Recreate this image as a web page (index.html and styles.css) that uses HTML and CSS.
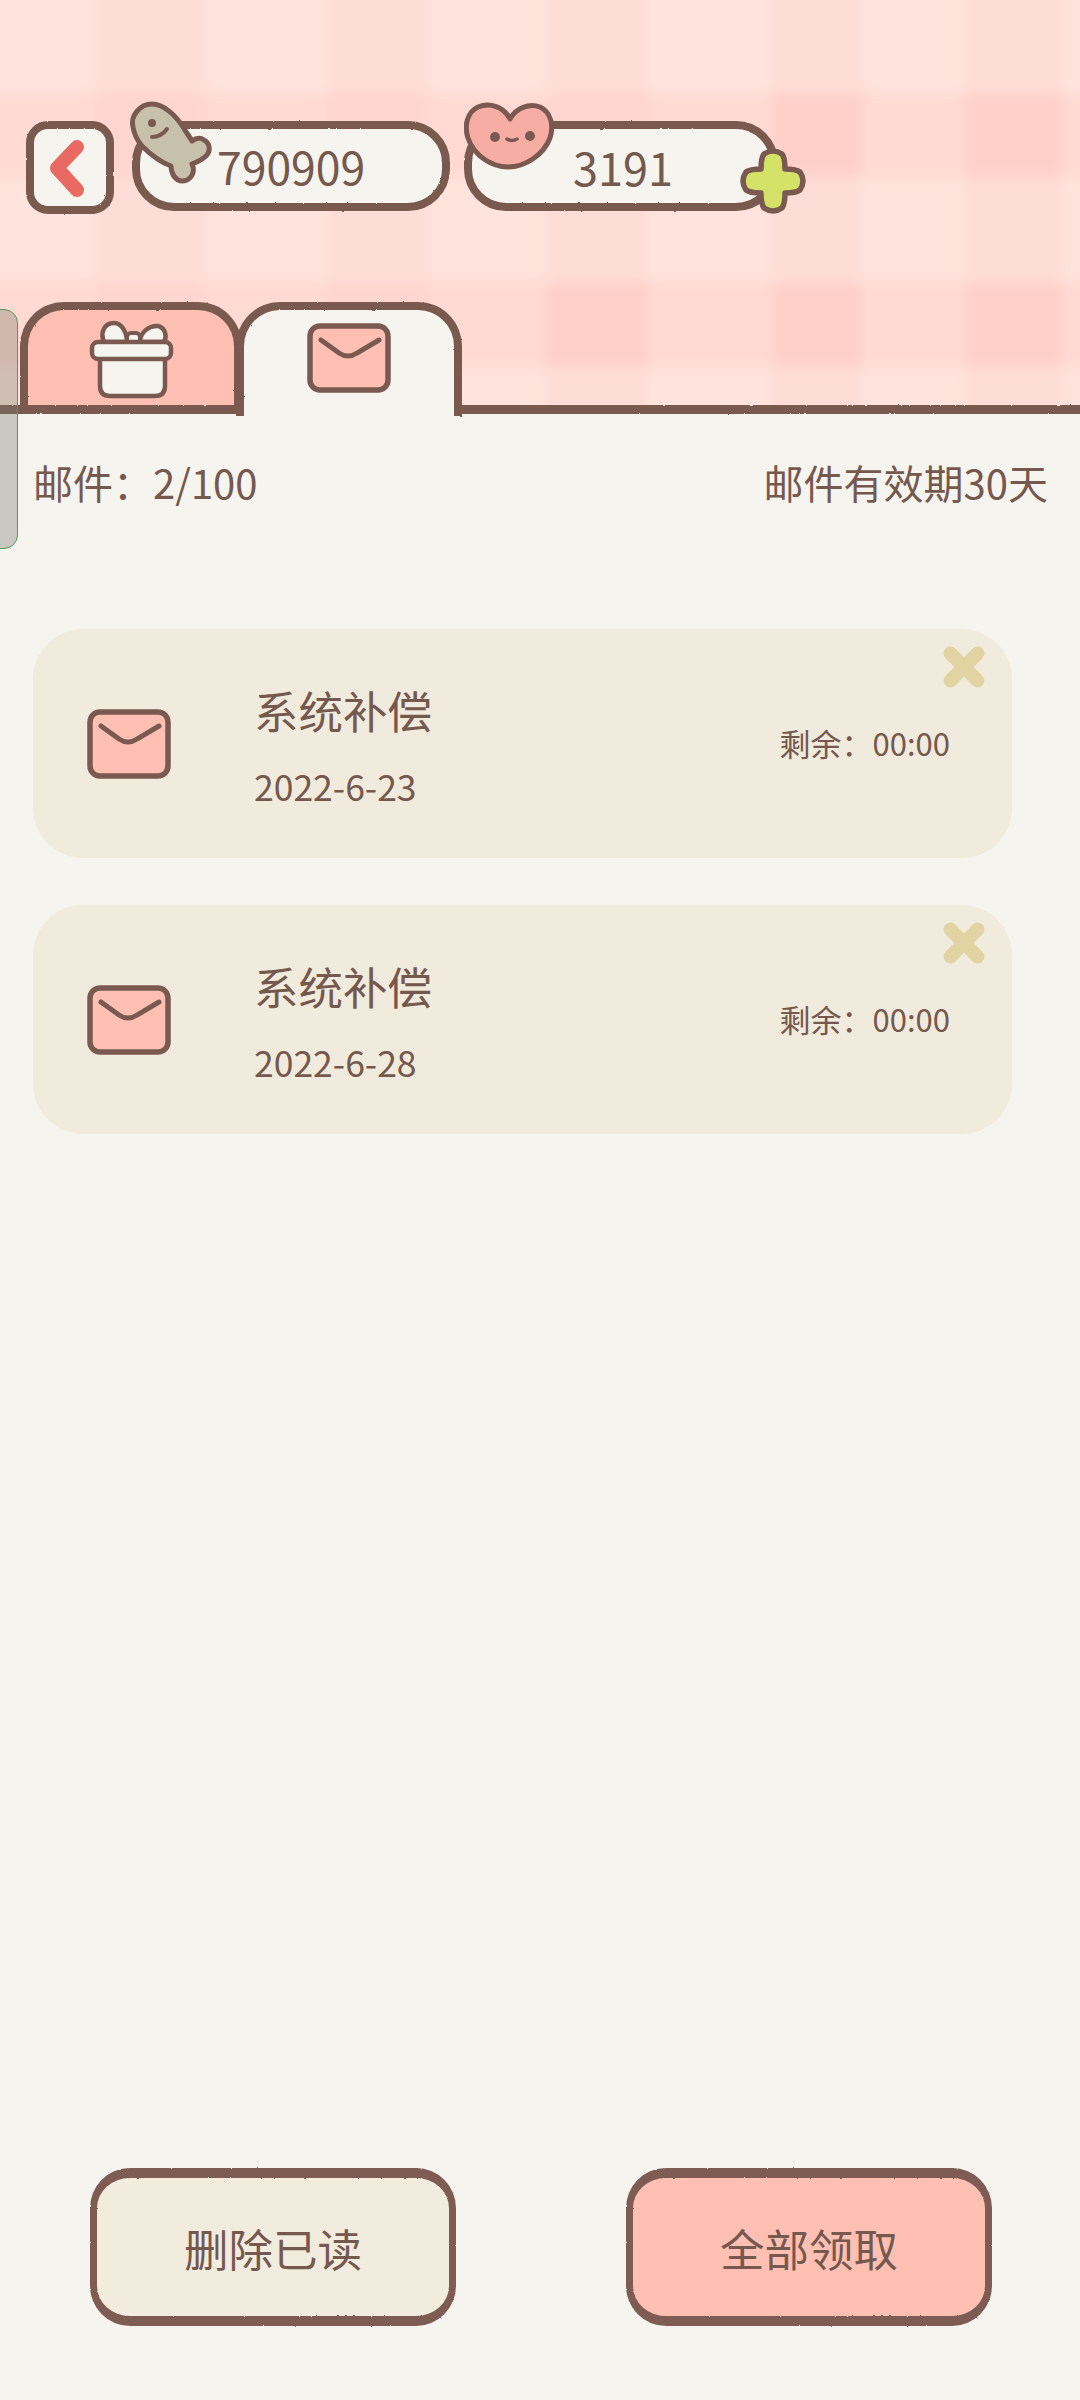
FILE: index.html
```html
<!DOCTYPE html>
<html lang="zh">
<head>
  <meta charset="UTF-8">
  <title>邮件</title>
  <link rel="stylesheet" href="styles.css">
</head>
<body>

  <svg class="defs" width="0" height="0">
    <filter id="rough" x="-5%" y="-5%" width="110%" height="110%">
      <feTurbulence type="fractalNoise" baseFrequency="0.3" numOctaves="2" seed="4"/>
      <feDisplacementMap in="SourceGraphic" scale="2"/>
    </filter>
    <filter id="rough-line" x="0" y="-100%" width="100%" height="300%">
      <feTurbulence type="fractalNoise" baseFrequency="0.3" numOctaves="2" seed="7"/>
      <feDisplacementMap in="SourceGraphic" scale="2"/>
    </filter>
    <filter id="soft" x="0" y="0" width="100%" height="100%">
      <feGaussianBlur stdDeviation="6"/>
    </filter>
  </svg>

  <div class="app">
    <div class="side-tab"></div>

    <header class="top">
      <svg class="plaid" viewBox="0 0 1080 405" preserveAspectRatio="none">
        <g filter="url(#soft)">
          <rect x="-20" y="-20" width="1120" height="445" fill="#ffe3dc"/>
          <g fill="#ffc9c2" fill-opacity="0.2">
            <rect x="96" y="-20" width="110" height="445"/>
            <rect x="328" y="-20" width="100" height="445"/>
            <rect x="545" y="-20" width="103" height="445"/>
            <rect x="772" y="-20" width="90" height="445"/>
            <rect x="965" y="-20" width="97" height="445"/>
          </g>
          <g fill="#ffc9c2" fill-opacity="0.34">
            <rect x="-20" y="93" width="1120" height="84"/>
            <rect x="-20" y="282" width="1120" height="85"/>
          </g>
          <g fill="#ffc9c2" fill-opacity="0.4">
            <rect x="772" y="93" width="90" height="84"/>
            <rect x="965" y="93" width="97" height="84"/>
            <rect x="545" y="282" width="103" height="85"/>
            <rect x="772" y="282" width="90" height="85"/>
            <rect x="965" y="282" width="97" height="85"/>
          </g>
        </g>
      </svg>

      <div class="wallet">
        <button class="back">
          <svg viewBox="0 0 88 93" class="back-icon">
            <path d="M51 26 L31 47 L51 69" fill="none" stroke="#e86a62" stroke-width="14" stroke-linecap="round" stroke-linejoin="round"/>
          </svg>
        </button>

        <div class="pill pill-fish">
          <svg class="fish" viewBox="0 0 100 100">
            <path d="M13 33 C10 22 20 10 32 10 C44 10 56 22 63 33 C66 38 69 42 72 47 C76 44 80 43 84 46 C90 49 91 57 86 62 C82 66 77 68 72 70 C75 76 73 83 67 86 C60 89 54 85 52 78 C51 75 51 73 51 72 C40 68 30 60 22 52 C17 46 14 40 13 33 Z" fill="#c7c1ac" stroke="#7a5a50" stroke-width="5" stroke-linejoin="round"/>
            <circle cx="32" cy="29" r="4" fill="#7a5a50"/>
            <path d="M32 43 Q41 43 47 35" fill="none" stroke="#7a5a50" stroke-width="4" stroke-linecap="round"/>
          </svg>
          <span class="amount amount-fish">790909</span>
        </div>

        <div class="pill pill-heart">
          <svg class="heart" viewBox="0 0 90 68">
            <path d="M46 17 C40 5 26 0 14 5 C3 10 0 24 4 36 C10 54 28 65 44 65 C62 65 80 52 86 36 C90 24 87 10 76 5 C65 1 52 6 46 17 Z" fill="#f7ada3" stroke="#7a5a50" stroke-width="5" stroke-linejoin="round"/>
            <circle cx="31" cy="35" r="5" fill="#7a5a50"/>
            <circle cx="66" cy="34" r="5" fill="#7a5a50"/>
            <path d="M43 37 Q48 40 53 37" fill="none" stroke="#7a5a50" stroke-width="3.5" stroke-linecap="round"/>
          </svg>
          <span class="amount">3191</span>
          <svg class="plus" viewBox="0 0 66 66">
            <path d="M24 6 Q33 0 42 6 Q45 10 45 21 Q56 21 60 24 Q66 33 60 42 Q56 45 45 45 Q45 56 42 60 Q33 66 24 60 Q21 56 21 45 Q10 45 6 42 Q0 33 6 24 Q10 21 21 21 Q21 10 24 6 Z" fill="#d5e268" stroke="#7a5a50" stroke-width="5.5" stroke-linejoin="round"/>
          </svg>
        </div>
      </div>

      <nav class="tabs">
        <div class="tab tab-off">
          <svg class="tab-icon" viewBox="-4 0 110 90">
            <path d="M24 27 C20 18 24 8 34 8 C42 8 47 18 47 27 Z" fill="#f6f4ee" stroke="#7a5a50" stroke-width="4.5" stroke-linejoin="round"/>
            <path d="M60 27 C60 17 70 10 78 11 C86 13 87 22 84 27 Z" fill="#f6f4ee" stroke="#7a5a50" stroke-width="4.5" stroke-linejoin="round"/>
            <rect x="47" y="18" width="13" height="11" rx="4" fill="#f6f4ee" stroke="#7a5a50" stroke-width="4"/>
            <path d="M20 42 V71 Q20 81 30 81 H75 Q85 81 85 71 V42 Z" fill="#f6f4ee" stroke="#7a5a50" stroke-width="4.5" stroke-linejoin="round"/>
            <rect x="12" y="27" width="79" height="17" rx="6" fill="#f6f4ee" stroke="#7a5a50" stroke-width="4.5"/>
          </svg>
        </div>
        <div class="tab tab-on">
          <svg class="envelope" viewBox="0 0 84 70">
            <rect x="3" y="3" width="78" height="64" rx="10" fill="#ffc0b3" stroke="#7a5a50" stroke-width="5.5"/>
            <path d="M14 17 L32 30 Q41 36 50 30 L72 17" fill="none" stroke="#7a5a50" stroke-width="5" stroke-linecap="round"/>
          </svg>
        </div>
      </nav>
    </header>

    <main class="content">
      <div class="mail-info">
        <span>邮件：2/100</span>
        <span>邮件有效期30天</span>
      </div>

      <div class="mail-list">
        <div class="mail-card">
          <svg class="envelope" viewBox="0 0 84 70">
            <rect x="3" y="3" width="78" height="64" rx="10" fill="#ffc0b3" stroke="#7a5a50" stroke-width="5.5"/>
            <path d="M14 17 L32 30 Q41 36 50 30 L72 17" fill="none" stroke="#7a5a50" stroke-width="5" stroke-linecap="round"/>
          </svg>
          <div class="mail-text">
            <div class="mail-title">系统补偿</div>
            <div class="mail-date">2022-6-23</div>
          </div>
          <div class="mail-left">剩余：00:00</div>
          <svg class="close" viewBox="0 0 42 42">
            <path d="M8 8 L34 34 M34 8 L8 34" stroke="#e2d3a3" stroke-width="13" stroke-linecap="round"/>
          </svg>
        </div>

        <div class="mail-card">
          <svg class="envelope" viewBox="0 0 84 70">
            <rect x="3" y="3" width="78" height="64" rx="10" fill="#ffc0b3" stroke="#7a5a50" stroke-width="5.5"/>
            <path d="M14 17 L32 30 Q41 36 50 30 L72 17" fill="none" stroke="#7a5a50" stroke-width="5" stroke-linecap="round"/>
          </svg>
          <div class="mail-text">
            <div class="mail-title">系统补偿</div>
            <div class="mail-date">2022-6-28</div>
          </div>
          <div class="mail-left">剩余：00:00</div>
          <svg class="close" viewBox="0 0 42 42">
            <path d="M8 8 L34 34 M34 8 L8 34" stroke="#e2d3a3" stroke-width="13" stroke-linecap="round"/>
          </svg>
        </div>
      </div>

      <div class="actions">
        <button class="action action-delete"><span>删除已读</span></button>
        <button class="action action-claim"><span>全部领取</span></button>
      </div>
    </main>
  </div>

</body>
</html>
```

FILE: styles.css
```css
* {
  box-sizing: border-box;
}

body {
  margin: 0;
  background: #f6f4ee;
  font-family: "Noto Sans CJK SC", "Noto Sans", sans-serif;
  color: #75584e;
}

.defs {
  position: absolute;
}

.app {
  position: relative;
  width: 1080px;
  height: 2400px;
  display: flex;
  flex-direction: column;
  overflow: hidden;
}

.side-tab {
  position: absolute;
  left: -20px;
  top: 309px;
  width: 38px;
  height: 240px;
  border: 1px solid #4f9a5c;
  border-radius: 14px;
  background: rgba(120, 120, 110, 0.35);
  z-index: 5;
}

/* header */
.top {
  position: relative;
  height: 414px;
  padding: 121px 0 0 26px;
  display: flex;
  flex-direction: column;
}

.top::after {
  content: "";
  position: absolute;
  left: 0;
  right: 0;
  bottom: 0;
  height: 9px;
  background: #7a5a50;
  filter: url(#rough-line);
}

.plaid {
  position: absolute;
  left: 0;
  top: 0;
  width: 1080px;
  height: 405px;
}

.wallet {
  position: relative;
  display: flex;
  align-items: flex-start;
  gap: 18px;
}

/* hand drawn outlines sit on ::before so the text stays clean */
.back,
.pill,
.tab,
.action {
  position: relative;
  background: none;
}

.back::before,
.pill::before,
.tab::before,
.action::before {
  content: "";
  position: absolute;
  left: 0;
  top: 0;
  right: 0;
  bottom: 0;
  border: 8px solid #7a5a50;
  filter: url(#rough);
}

.back {
  width: 88px;
  height: 93px;
  padding: 0;
  border: none;
}

.back::before {
  border-radius: 22px;
  background: #f6f4ee;
}

.back-icon {
  position: absolute;
  left: 0;
  top: 0;
  width: 88px;
  height: 93px;
}

.pill {
  height: 90px;
  display: flex;
  align-items: center;
}

.pill::before {
  background: #f6f4ee;
  border-radius: 42px;
}

.pill-fish {
  width: 318px;
  padding-left: 85px;
}

.pill-heart {
  width: 314px;
  margin-left: -4px;
  padding-left: 109px;
}

.amount {
  position: relative;
  font-size: 45px;
  line-height: 1;
}

.amount-fish {
  font-size: 44.5px;
}

.fish {
  position: absolute;
  left: -12px;
  top: -27px;
  width: 100px;
  height: 100px;
}

.heart {
  position: absolute;
  left: 0;
  top: -19px;
  width: 90px;
  height: 68px;
}

.plus {
  position: absolute;
  right: -28px;
  top: 27px;
  width: 66px;
  height: 66px;
}

.tabs {
  position: relative;
  z-index: 1;
  display: flex;
  margin-top: 88px;
  margin-left: -6px;
}

.tab {
  width: 222px;
  height: 103px;
  display: flex;
  justify-content: center;
}

.tab::before {
  border-bottom: none;
  border-radius: 44px 44px 0 0;
}

.tab-off::before {
  background: #ffc0b3;
}

.tab-off {
  padding-top: 13px;
}

.tab-on {
  width: 226px;
  height: 114px;
  margin-left: -6px;
  padding-top: 21px;
}

.tab-on::before {
  background: #f6f4ee;
}

.tab-icon {
  position: relative;
  width: 110px;
  height: 90px;
}

.envelope {
  position: relative;
  width: 84px;
  height: 70px;
  flex: none;
}

/* content */
.content {
  flex: 1;
  display: flex;
  flex-direction: column;
  padding: 0 32px 74px 33px;
}

.mail-info {
  display: flex;
  justify-content: space-between;
  align-items: center;
  height: 60px;
  margin-top: 38px;
  font-size: 40px;
}

.mail-list {
  display: flex;
  flex-direction: column;
  gap: 47px;
  margin-top: 117px;
}

.mail-card {
  position: relative;
  width: 979px;
  height: 229px;
  padding-left: 54px;
  border-radius: 50px;
  background: #f1ebdd;
  display: flex;
  align-items: center;
}

.mail-text {
  margin-left: 83px;
  align-self: flex-start;
  padding-top: 49px;
}

.mail-title {
  font-size: 44.5px;
  line-height: 64px;
}

.mail-date {
  margin-top: 22px;
  font-size: 35.5px;
  line-height: 44px;
}

.mail-left {
  margin-left: auto;
  margin-right: 62px;
  margin-bottom: 3px;
  font-size: 31px;
}

.close {
  position: absolute;
  right: 26px;
  top: 16px;
  width: 44px;
  height: 44px;
}

.actions {
  margin-top: auto;
  display: flex;
  justify-content: space-between;
  padding: 0 56px 0 57px;
}

.action {
  width: 366px;
  height: 158px;
  padding: 0;
  border: none;
  font-family: inherit;
  font-size: 44.5px;
  color: #75584e;
}

.action span {
  position: relative;
}

.action::before {
  border-color: #7e5c52;
  border-width: 10px 7px;
  border-radius: 40px;
}

.action-delete::before {
  background: #f1ecde;
}

.action-claim::before {
  background: #ffc0b3;
}
```
